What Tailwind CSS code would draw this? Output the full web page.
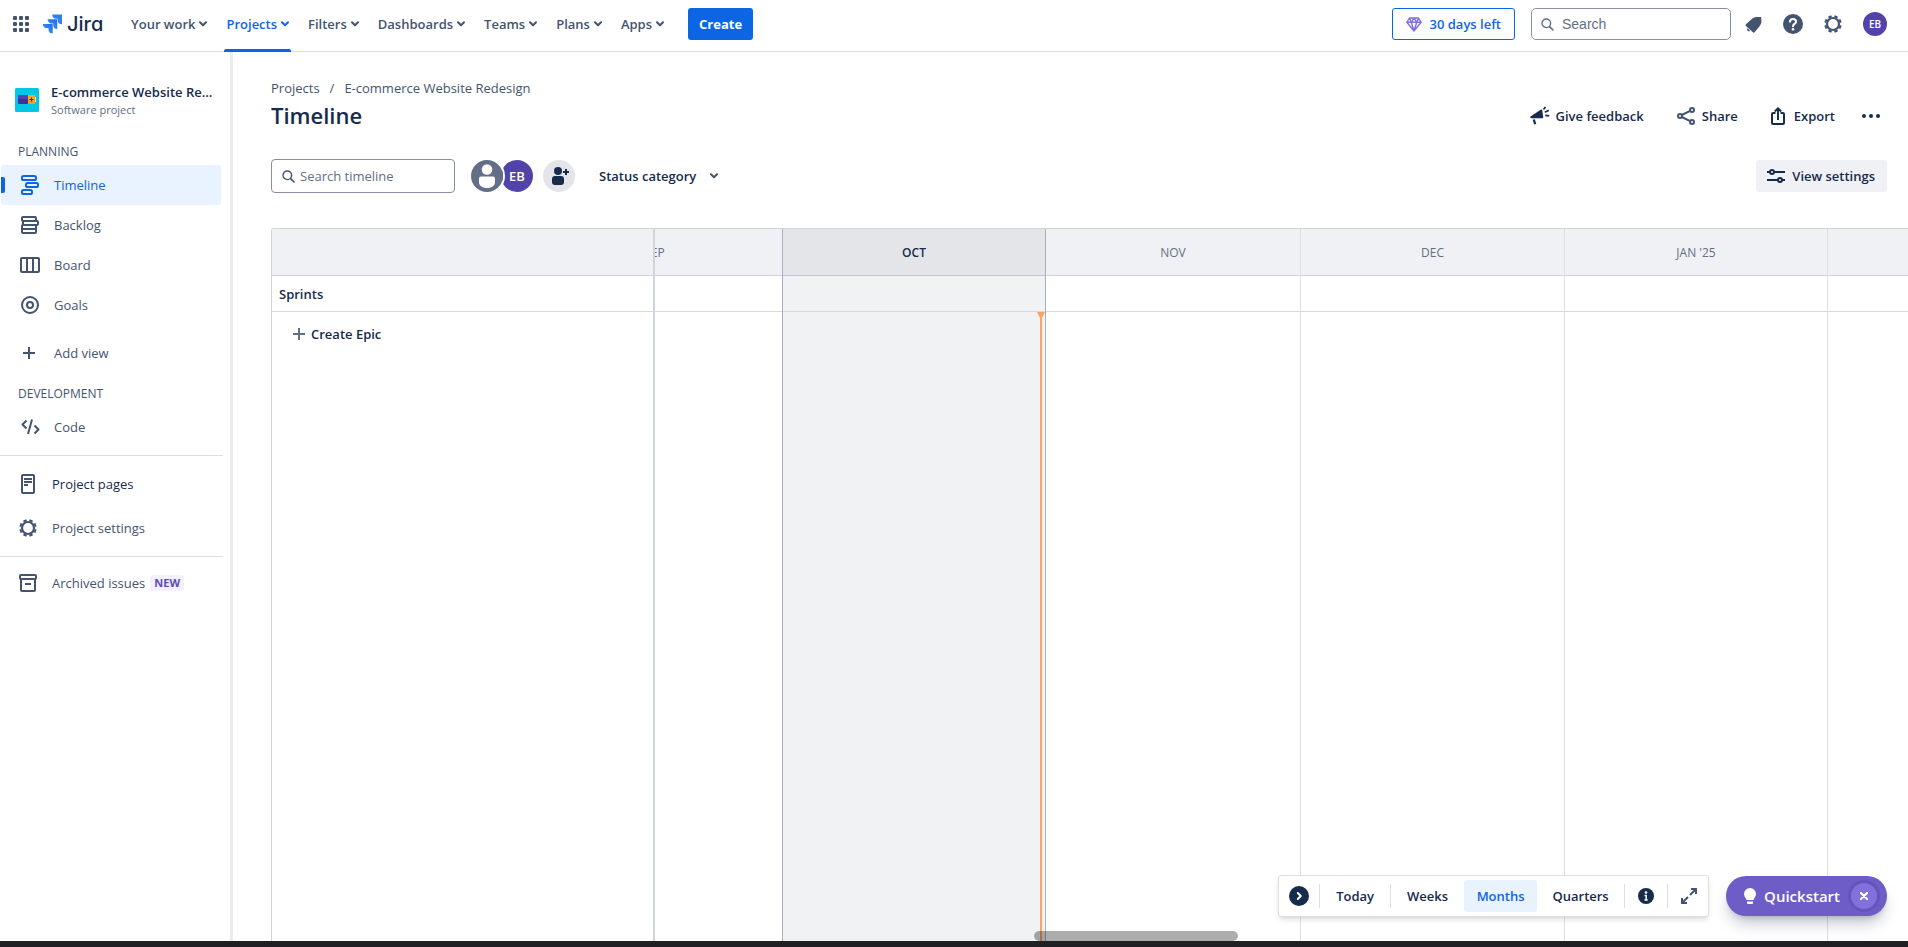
<!DOCTYPE html>
<html lang="en">
<head>
<meta charset="utf-8">
<title>Timeline - E-commerce Website Redesign - Jira</title>
<script src="https://cdn.jsdelivr.net/npm/@tailwindcss/browser@4"></script>
</head>
<body class="flex h-screen flex-col overflow-hidden bg-white font-['Open_Sans','Noto_Sans',sans-serif] text-[13px] leading-5 text-[#44546F]">

<svg class="hidden" aria-hidden="true">
  <symbol id="chev" viewBox="0 0 8 6"><path d="M1 1.2l3 3 3-3" fill="none" stroke="currentColor" stroke-width="2" stroke-linecap="round" stroke-linejoin="round"/></symbol>
  <symbol id="lens" viewBox="0 0 13 13"><circle cx="5.3" cy="5.3" r="4.3" fill="none" stroke="currentColor" stroke-width="1.4"/><path d="M8.6 8.6l3.4 3.4" stroke="currentColor" stroke-width="1.6" stroke-linecap="round"/></symbol>
  <symbol id="gear" viewBox="0 0 18 18"><circle cx="9" cy="9" r="6" fill="none" stroke="currentColor" stroke-width="2.2"/><g fill="none" stroke="currentColor" stroke-width="3.4"><path d="M9 .3v2M9 15.7v2M.3 9h2M15.7 9h2" transform="rotate(22.5 9 9)"/><path d="M9 .3v2M9 15.7v2M.3 9h2M15.7 9h2" transform="rotate(67.5 9 9)"/></g></symbol>
</svg>

<header class="flex h-[52px] shrink-0 items-center justify-between border-b border-[#DCDFE4] pr-[21px] pb-[3px] pl-[13px]">
  <div class="flex h-full items-center">
    <button aria-label="Switch to" class="mr-3.5 block">
      <svg class="size-4" viewBox="0 0 16 16" fill="#44546F"><rect width="4" height="4" rx="1"/><rect x="6" width="4" height="4" rx="1"/><rect x="12" width="4" height="4" rx="1"/><rect y="6" width="4" height="4" rx="1"/><rect x="6" y="6" width="4" height="4" rx="1"/><rect x="12" y="6" width="4" height="4" rx="1"/><rect y="12" width="4" height="4" rx="1"/><rect x="6" y="12" width="4" height="4" rx="1"/><rect x="12" y="12" width="4" height="4" rx="1"/></svg>
    </button>
    <a href="#" class="mr-7 flex w-[58px] items-center gap-[5px]">
      <svg class="h-5 w-[19px] shrink-0" viewBox="0 0 19 20">
        <defs><linearGradient id="jg" x1="1" y1="0" x2="0.3" y2="0.8"><stop offset="0" stop-color="#1D6FE0"/><stop offset="1" stop-color="#388BFF"/></linearGradient></defs>
        <path d="M9.2.6H19v9.7a4.3 4.3 0 0 1-4.2-4.3V4.8h-1.5A4.2 4.2 0 0 1 9.2.6z" fill="#2F7FF5"/>
        <path d="M4.6 5.2h9.7v9.8A4.3 4.3 0 0 1 10.200 10.700V9.500H8.700A4.200 4.200 0 0 1 4.600 5.200z" fill="url(#jg)"/>
        <path d="M0 9.900h9.700v9.700a4.300 4.300 0 0 1-4.200-4.300v-1.200H4.100A4.200 4.200 0 0 1 0 9.900z" fill="url(#jg)"/>
      </svg>
      <span class="font-['Inter',sans-serif] text-[20px] leading-6 font-medium text-[#172B4D] [font-feature-settings:'cv11']">Jira</span>
    </a>
    <nav class="mr-[22px] flex h-full items-center gap-[15px]">
      <button class="flex h-full items-center gap-1 px-0.5 font-semibold">Your work<svg class="h-1.5 w-2"><use href="#chev"/></svg></button>
      <button class="relative flex h-full items-center gap-1 px-0.5 font-semibold text-[#0C66E4]">Projects<svg class="h-1.5 w-2"><use href="#chev"/></svg><span class="absolute inset-x-0 -bottom-1 h-[3px] rounded-t-xs bg-[#0C66E4]"></span></button>
      <button class="flex h-full items-center gap-1 px-0.5 font-semibold">Filters<svg class="h-1.5 w-2"><use href="#chev"/></svg></button>
      <button class="flex h-full items-center gap-1 px-0.5 font-semibold">Dashboards<svg class="h-1.5 w-2"><use href="#chev"/></svg></button>
      <button class="flex h-full items-center gap-1 px-0.5 font-semibold">Teams<svg class="h-1.5 w-2"><use href="#chev"/></svg></button>
      <button class="flex h-full items-center gap-1 px-0.5 font-semibold">Plans<svg class="h-1.5 w-2"><use href="#chev"/></svg></button>
      <button class="flex h-full items-center gap-1 px-0.5 font-semibold">Apps<svg class="h-1.5 w-2"><use href="#chev"/></svg></button>
    </nav>
    <button class="h-8 rounded-[3px] bg-[#0C66E4] px-[11px] font-bold text-white">Create</button>
  </div>
  <div class="flex items-center">
    <button class="mr-4 flex h-8 items-center gap-2 rounded-[3px] border border-[#0C66E4] px-[13px] font-semibold text-[#0C66E4]">
      <svg class="h-[15px] w-4" viewBox="0 0 16 15" fill="none" stroke="#8270DB" stroke-width="1.4" stroke-linejoin="round"><path d="M3.500 1h9L15.200 5.300 8 14 .8 5.300z M.8 5.300h14.400 M3.500 1l1.800 4.300L8 14l2.700-8.700L12.500 1 M5.300 5.300L8 1l2.700 4.300"/></svg>
      30 days left
    </button>
    <label class="mr-1.5 flex h-8 w-[200px] items-center gap-2 rounded-[5px] border border-[#8590A2] px-[9px] text-[#626F86]">
      <svg class="size-[13px] shrink-0"><use href="#lens"/></svg>
      <input type="text" aria-label="Search" placeholder="Search" class="w-full min-w-0 font-['Liberation_Sans',sans-serif] text-[14px] outline-none placeholder:text-[#626F86]">
    </label>
    <div class="flex items-center gap-2 text-[#44546F]">
      <button aria-label="Notifications" class="flex size-8 items-center justify-center"><svg class="size-[17px]" viewBox="0 0 17 17" fill="currentColor"><path d="M.7 9.800C.3 9.400.5 8.800 1 8.300L6.800 3C8.600 1.300 10.700.8 13 .9l2.300.1c.6 0 1 .4 1 1l.1 2.400c.1 2.200-.5 4.200-2 6l-4.800 5.900c-.4.500-1 .6-1.400.2z"/><path d="M2.600 12.200l2.500 2.600c-.7.700-1.700.700-2.400 0s-.8-1.900-.1-2.600z"/></svg></button>
      <button aria-label="Help" class="flex size-8 items-center justify-center"><svg class="size-5" viewBox="0 0 20 20"><circle cx="10" cy="10" r="10" fill="currentColor"/><path d="M7 7.800c0-1.700 1.300-2.800 3-2.800s3 1.100 3 2.700c0 2.100-3 2.300-3 4.500" fill="none" stroke="#fff" stroke-width="2" stroke-linecap="round"/><circle cx="10" cy="15.300" r="1.250" fill="#fff"/></svg></button>
      <button aria-label="Settings" class="flex size-8 items-center justify-center"><svg class="size-[18px]"><use href="#gear"/></svg></button>
      <button aria-label="Your profile" class="ml-1.5 flex size-6 items-center justify-center rounded-full bg-[#5243AA] text-[10px] font-semibold text-white">EB</button>
    </div>
  </div>
</header>

<div class="flex min-h-0 flex-1">
  <aside class="w-[233px] shrink-0 border-r-[3px] border-[#EBECF0] pr-[7px]">
    <div class="flex items-center gap-3 pt-[30px] pl-[15px]">
      <svg class="size-6 shrink-0" viewBox="0 0 24 24"><rect width="24" height="24" rx="1.500" fill="#00C7E6"/><rect x="3" y="7" width="11" height="9" rx="1" fill="#403294"/><path d="M4 7h9v4H3V8a1 1 0 0 1 1-1z" fill="#5243AA"/><path d="M13 7h6a1 1 0 0 1 1 1v7a1 1 0 0 1-1 1h-6z" fill="#FF991F"/><path d="M13 7h6a1 1 0 0 1 1 1v3h-7z" fill="#FFAB00"/><rect x="20" y="9" width="1" height="5" fill="#FFE380"/><path d="M16.500 9.500v4M14.500 11.500h4" stroke="#403294" stroke-width="1.200"/></svg>
      <div class="min-w-0">
        <p class="leading-5 font-semibold whitespace-nowrap text-[#172B4D]">E-commerce Website Re...</p>
        <p class="text-[11px] leading-4 text-[#626F86]">Software project</p>
      </div>
    </div>
    <h2 class="mt-[26px] pl-[18px] text-[12px] leading-4 font-medium">PLANNING</h2>
    <nav class="mt-[5px] pl-px">
      <a href="#" class="relative mr-0.5 flex h-10 items-center gap-3.5 rounded-[3px] bg-[#E9F2FF] pl-[19px] text-[#0C66E4]">
        <span class="absolute top-3 left-0 h-4 w-1 rounded-r-xs bg-[#0C66E4]"></span>
        <svg class="size-5" viewBox="0 0 20 20" fill="none" stroke="currentColor" stroke-width="2"><rect x="2" y="1" width="14" height="4" rx="1.600"/><rect x="6" y="8" width="12" height="4" rx="1.600"/><rect x="2" y="15" width="10" height="4" rx="1.600"/></svg>Timeline</a>
      <a href="#" class="flex h-10 items-center gap-3.5 pl-[19px]">
        <svg class="size-5" viewBox="0 0 20 20" fill="none" stroke="currentColor" stroke-width="2"><rect x="2" y="2" width="14" height="4" rx="1"/><rect x="3" y="6" width="15" height="4" rx="1"/><path d="M3 10h13v7a1 1 0 0 1-1 1H3a1 1 0 0 1-1-1v-6a1 1 0 0 1 1-1zM2 14h14"/></svg>Backlog</a>
      <a href="#" class="flex h-10 items-center gap-3.5 pl-[19px]">
        <svg class="size-5" viewBox="0 0 20 20" fill="none" stroke="currentColor" stroke-width="2"><rect x="1" y="3" width="18" height="14" rx="1"/><path d="M7 3v14M13 3v14"/></svg>Board</a>
      <a href="#" class="flex h-10 items-center gap-3.5 pl-[19px]">
        <svg class="size-5" viewBox="0 0 20 20" fill="none" stroke="currentColor" stroke-width="2"><circle cx="10" cy="10" r="8"/><circle cx="10" cy="10" r="3"/></svg>Goals</a>
      <a href="#" class="mt-2 flex h-10 items-center gap-3.5 pl-[19px]">
        <svg class="size-5" viewBox="0 0 20 20" fill="none" stroke="currentColor" stroke-width="2"><path d="M9 4v12M3 10h12"/></svg>Add view</a>
    </nav>
    <h2 class="mt-[13px] pl-[18px] text-[12px] leading-4 font-medium">DEVELOPMENT</h2>
    <nav class="mt-[5px] border-b border-[#DCDFE4] pb-2 pl-px">
      <a href="#" class="flex h-10 items-center gap-3.5 pl-[19px]">
        <svg class="size-5" viewBox="0 0 20 20" fill="none" stroke="currentColor" stroke-width="2" stroke-linejoin="round"><path d="M6.500 3.500L2.500 7.500l4 4M12 2.500L8 17M14.500 8.500l4 4-4 4"/></svg>Code</a>
    </nav>
    <nav class="border-b border-[#DCDFE4] py-1.5">
      <a href="#" class="flex h-11 items-center gap-3 pl-5 text-[#172B4D]">
        <svg class="size-5" viewBox="0 0 20 20" fill="none" stroke="#44546F" stroke-width="2"><rect x="2" y="1" width="12" height="18" rx="1"/><path d="M4 5h8M4 8h8M4 11h4"/></svg>Project pages</a>
      <a href="#" class="flex h-11 items-center gap-[15px] pl-[19px]">
        <svg class="size-[18px]"><use href="#gear"/></svg>Project settings</a>
    </nav>
    <a href="#" class="mt-1.5 flex h-10 items-center gap-[13px] pl-[19px]">
      <svg class="size-5 shrink-0" viewBox="0 0 20 20" fill="none" stroke="currentColor" stroke-width="2"><rect x="1" y="2" width="16" height="4" rx="1"/><path d="M2 6v11a1 1 0 0 0 1 1h12a1 1 0 0 0 1-1V6M6 11h6"/></svg>
      <span class="flex items-center gap-[5px]">Archived issues<span class="rounded-[3px] bg-[#F3F0FF] px-1 text-[11px] leading-4 font-bold text-[#5E4DB2]">NEW</span></span></a>
  </aside>

  <main class="flex min-w-0 flex-1 flex-col pl-[38px]">
    <div class="flex items-end justify-between pt-[26px] pr-[21px]">
      <div>
        <nav aria-label="Breadcrumb" class="flex gap-2.5"><a href="#">Projects</a><span>/</span><a href="#">E-commerce Website Redesign</a></nav>
        <h1 class="my-[3px] text-[22px] leading-7 font-semibold text-[#172B4D]">Timeline</h1>
      </div>
      <div class="flex items-center font-semibold text-[#172B4D]">
        <button class="mr-8 flex h-8 items-center gap-1.5">
          <svg class="size-5" viewBox="0 0 20 20" fill="currentColor"><path d="M.5 10.500L11 3.500c.6-.3 1 0 1.200.6l1 7.200c0 .600-.3.900-1 .900H1.200C.4 12.200 0 11.500.5 10.500z"/><path d="M3.800 13.500l1.400 4.800" stroke="currentColor" stroke-width="2.200"/><path d="M13.500 3.500L15.500 1M14.800 6.300l4-2M15.200 9.300l4 .6" stroke="currentColor" stroke-width="1.800"/></svg>Give feedback</button>
        <button class="mr-[30px] flex h-8 items-center gap-1.5">
          <svg class="size-5" viewBox="0 0 20 20" fill="none" stroke="#44546F" stroke-width="2"><circle cx="4" cy="10" r="2"/><circle cx="16" cy="4" r="2"/><circle cx="16" cy="16" r="2"/><path d="M5.800 9l8.400-4.200M5.800 11l8.400 4.200"/></svg>Share</button>
        <button class="mr-5 flex h-8 items-center gap-1.5">
          <svg class="size-5" viewBox="0 0 20 20" fill="none" stroke="currentColor" stroke-width="2"><path d="M7.500 7H5a1 1 0 0 0-1 1v9a1 1 0 0 0 1 1h10a1 1 0 0 0 1-1V8a1 1 0 0 0-1-1h-2.500M10 14V3M6.800 5.500L10 2.300l3.200 3.200"/></svg>Export</button>
        <button aria-label="More actions" class="flex h-8 w-8 items-center justify-center"><svg class="h-1 w-[18px]" viewBox="0 0 18 4" fill="currentColor"><circle cx="2" cy="2" r="2"/><circle cx="9" cy="2" r="2"/><circle cx="16" cy="2" r="2"/></svg></button>
      </div>
    </div>

    <div class="mt-[27px] flex items-center justify-between pr-[21px]">
      <div class="flex items-center">
        <label class="mr-4 flex h-[34px] w-[184px] items-center gap-[5px] rounded-[4px] border border-[#8590A2] px-2.5 text-[#44546F]">
          <svg class="size-[13px] shrink-0"><use href="#lens"/></svg>
          <input type="text" aria-label="Search timeline" placeholder="Search timeline" class="w-full min-w-0 outline-none placeholder:text-[#626F86]">
        </label>
        <button aria-label="Unassigned" class="z-10 -mr-0.5 size-8 rounded-full ring-2 ring-white"><svg class="size-8" viewBox="0 0 32 32"><circle cx="16" cy="16" r="16" fill="#626F86"/><circle cx="16" cy="9.500" r="5.300" fill="#fff"/><path d="M8 18.500a2 2 0 0 1 2-2h12a2 2 0 0 1 2 2V22c0 3.500-3 6-8 6s-8-2.500-8-6z" fill="#fff"/></svg></button>
        <button class="mr-2.5 size-8 rounded-full bg-[#5243AA] text-[13px] font-semibold text-white">EB</button>
        <button aria-label="Add people" class="mr-6 size-8 rounded-full bg-[#E4E5E9] text-[#172B4D]"><svg class="size-8" viewBox="0 0 32 32" fill="currentColor"><circle cx="15" cy="11" r="4"/><rect x="9" y="16" width="12" height="9" rx="3"/><path d="M23 9v6M20 12h6" stroke="currentColor" stroke-width="2"/></svg></button>
        <button class="flex h-8 items-center gap-3.5 font-semibold text-[#172B4D]">Status category<svg class="h-1.5 w-2 text-[#44546F]"><use href="#chev"/></svg></button>
      </div>
      <button class="flex h-8 items-center gap-1.5 rounded-[3px] bg-[#F0F1F4] pr-3 pl-2.5 font-semibold text-[#172B4D]">
        <svg class="size-5" viewBox="0 0 20 20" fill="none" stroke="currentColor" stroke-width="2"><path d="M1 6h3M8 6h11M1 14h11M16 14h3"/><circle cx="6" cy="6" r="2"/><circle cx="14" cy="14" r="2"/></svg>View settings</button>
    </div>

    <section aria-label="Timeline chart" class="relative mt-[35px] flex min-h-0 flex-1 overflow-hidden rounded-tl-[3px] border-t border-l border-[#D0D4DB]">
      <div class="z-10 flex w-[383px] shrink-0 flex-col border-r-2 border-[#D0D4DB] bg-white text-[#172B4D]">
        <div class="h-[47px] border-b border-[#D0D4DB] bg-[#F0F1F4]"></div>
        <div class="flex h-9 items-center border-b border-[#D5D9E0] pl-[7px] font-semibold">Sprints</div>
        <button class="flex h-11 items-center gap-1.5 pl-[21px] font-semibold"><svg class="size-3" viewBox="0 0 12 12"><path d="M6 0v12M0 6h12" stroke="#626F86" stroke-width="2"/></svg>Create Epic</button>
      </div>
      <div class="flex min-w-0 flex-1 overflow-hidden text-[12px] font-medium text-[#626F86]">
        <div class="-ml-32 flex w-64 shrink-0 flex-col border-r border-[#A9B0BC]"><div class="flex h-[47px] items-center justify-center border-b border-[#D0D4DB] bg-[#F0F1F4] pt-0.5">SEP</div><div class="h-9 border-b border-[#D5D9E0]"></div></div>
        <div class="relative flex w-[263px] shrink-0 flex-col border-r border-[#A9B0BC] bg-[#F1F2F4]"><div class="flex h-[47px] items-center justify-center border-b border-[#C1C5CE] bg-[#E4E5E9] pt-0.5 font-semibold text-[#172B4D]">OCT</div><div class="h-9 border-b border-[#D5D9E0]"></div>
          <div class="absolute top-[83px] right-0 bottom-0 flex w-2 flex-col items-center"><svg class="h-1.5 w-2 shrink-0" viewBox="0 0 8 6"><path d="M0 0h8L5 6H3z" fill="#FEA362"/></svg><span class="w-0.5 flex-1 bg-[#FEA362]"></span></div>
        </div>
        <div class="flex w-[255px] shrink-0 flex-col border-r border-[#DCDFE4]"><div class="flex h-[47px] items-center justify-center border-b border-[#D0D4DB] bg-[#F0F1F4] pt-0.5">NOV</div><div class="h-9 border-b border-[#D5D9E0]"></div></div>
        <div class="flex w-[264px] shrink-0 flex-col border-r border-[#DCDFE4]"><div class="flex h-[47px] items-center justify-center border-b border-[#D0D4DB] bg-[#F0F1F4] pt-0.5">DEC</div><div class="h-9 border-b border-[#D5D9E0]"></div></div>
        <div class="flex w-[263px] shrink-0 flex-col border-r border-[#DCDFE4]"><div class="flex h-[47px] items-center justify-center border-b border-[#D0D4DB] bg-[#F0F1F4] pt-0.5">JAN '25</div><div class="h-9 border-b border-[#D5D9E0]"></div></div>
        <div class="flex min-w-0 flex-1 flex-col"><div class="h-[47px] border-b border-[#D0D4DB] bg-[#F0F1F4]"></div><div class="h-9 border-b border-[#D5D9E0]"></div></div>
      </div>

      <div class="absolute bottom-0 left-[762px] z-20 h-2.5 w-[204px] rounded-full bg-black/32"></div>

      <div class="absolute right-[21px] bottom-6 z-20 flex items-center gap-[17px]">
        <div class="flex h-[42px] items-center rounded-[3px] border border-[#DCDFE4] bg-white pr-[11px] pl-2.5 font-semibold text-[#172B4D] shadow-md shadow-black/10">
          <button aria-label="Collapse toolbar" class="mr-2.5"><svg class="block size-5" viewBox="0 0 20 20"><circle cx="10" cy="10" r="10" fill="#172B4D"/><path d="M8.800 7l3 3-3 3" fill="none" stroke="#fff" stroke-width="2" stroke-linecap="round" stroke-linejoin="round"/></svg></button>
          <span class="h-6 w-px bg-[#DCDFE4]"></span>
          <button class="h-8 w-[70px]">Today</button>
          <span class="h-6 w-px bg-[#DCDFE4]"></span>
          <button class="h-8 w-[73px]">Weeks</button>
          <button class="h-8 w-[73px] rounded-[3px] bg-[#E9F2FF] text-[#0C66E4]">Months</button>
          <button class="h-8 w-[87px]">Quarters</button>
          <span class="h-6 w-px bg-[#DCDFE4]"></span>
          <button aria-label="Legend" class="mx-[13px]"><svg class="block size-4" viewBox="0 0 16 16"><circle cx="8" cy="8" r="8" fill="#172B4D"/><circle cx="8" cy="4.500" r="1.300" fill="#fff"/><path d="M6.500 7.500h1.700V12M6.500 12h3.200" fill="none" stroke="#fff" stroke-width="1.500"/></svg></button>
          <span class="h-6 w-px bg-[#DCDFE4]"></span>
          <button aria-label="Enter full screen" class="ml-[13px]"><svg class="block size-4" viewBox="0 0 16 16" fill="none" stroke="#44546F" stroke-width="2"><path d="M10 1h5v5M15 1L9 7M1 10v5h5M1 15l6-6"/></svg></button>
        </div>
        <div class="flex h-10 items-center rounded-full bg-[#6E5DC6] pr-2.5 pl-[18px] text-white shadow-lg shadow-[#091E42]/25">
          <button class="flex items-center gap-2 text-[15px] font-semibold"><svg class="h-4 w-3" viewBox="0 0 12 16" fill="#fff"><path d="M6 0a6 6 0 0 1 6 6c0 2.800-2 4-2.500 6h-7C2 10 0 8.800 0 6a6 6 0 0 1 6-6z"/><path d="M3 13.500h6V15a1 1 0 0 1-1 1H4a1 1 0 0 1-1-1z"/></svg>Quickstart</button>
          <button aria-label="Dismiss Quickstart" class="ml-[11px] flex size-[26px] items-center justify-center rounded-full bg-[#8270DB] ring-3 ring-[#6554BB]"><svg class="size-2" viewBox="0 0 8 8"><path d="M1 1l6 6M7 1L1 7" stroke="#fff" stroke-width="2.200" stroke-linecap="round"/></svg></button>
        </div>
      </div>
    </section>
  </main>
</div>
<footer class="h-1.5 shrink-0 bg-[#202024]"></footer>
</body>
</html>
